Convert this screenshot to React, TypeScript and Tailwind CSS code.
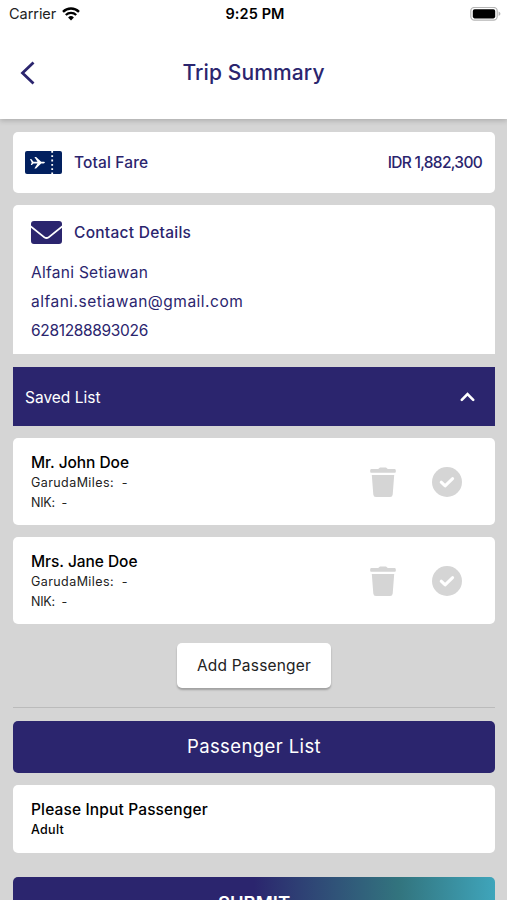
const passengers = [
  { name: "Mr. John Doe", miles: "-", nik: "-" },
  { name: "Mrs. Jane Doe", miles: "-", nik: "-" },
];

function StatusBar() {
  return (
    <div className="grid h-7 grid-cols-3 items-center pr-1.5 pl-[9px] text-[14.5px] text-[#222]">
      <div className="flex items-center gap-1.5">
        <span className="tracking-[-0.05px]">Carrier</span>
        <svg className="h-[14px] w-[18px]" viewBox="0 0 18 14" fill="none" stroke="#000">
          <path d="M1 4.8a11.4 11.4 0 0 1 16 0" strokeWidth="2.4" />
          <path d="M3.8 8a7.5 7.5 0 0 1 10.4 0" strokeWidth="2.3" />
          <path d="M9 13.4 6.1 10.5a4.1 4.1 0 0 1 5.8 0Z" fill="#000" stroke="none" />
        </svg>
      </div>
      <span className="text-center font-semibold tracking-[0.1px] text-black">9:25 PM</span>
      <svg className="h-[14px] w-[31px] justify-self-end" viewBox="0 0 31 14">
        <rect x="0.8" y="0.4" width="26.4" height="12.8" rx="3.6" fill="#fff" stroke="#b5b5b5" strokeWidth="1.2" />
        <rect x="2.8" y="2.2" width="22.4" height="9.2" rx="1.8" fill="#000" />
        <path d="M28.6 4.6v4.4c1.2-.5 1.8-1.3 1.8-2.2s-.6-1.7-1.8-2.2Z" fill="#b5b5b5" />
      </svg>
    </div>
  );
}

function TicketIcon() {
  return (
    <svg className="h-[23px] w-[37px] shrink-0" viewBox="0 0 37 23">
      <rect width="37" height="23" rx="2" fill="#02205f" />
      <path d="M27.2 0v23" stroke="#fff" strokeWidth="1.8" strokeDasharray="1.8 2.5" />
      <path
        d="M5 8h1.2l2.3 2.8h4L9.4 6h1.7l5.1 4.8h2.3c.9 0 1.4.3 1.4.8s-.5.8-1.4.8h-2.3l-5.1 5H9.4l3.1-5h-4L6.9 14H5.8l.9-2.4Z"
        fill="#fff"
      />
    </svg>
  );
}

function EnvelopeIcon() {
  return (
    <svg className="h-[23px] w-[31px] shrink-0" viewBox="0 0 31 23" fill="currentColor">
      <path d="M3 0h25a3 3 0 0 1 3 3v1.6L17.3 15.4a3 3 0 0 1-3.6 0L0 4.6V3a3 3 0 0 1 3-3Z" />
      <path d="M0 6.8 12.8 17a4.4 4.4 0 0 0 5.4 0L31 6.8V20a3 3 0 0 1-3 3H3a3 3 0 0 1-3-3Z" />
    </svg>
  );
}

function TrashIcon() {
  return (
    <svg className="ml-auto h-[30px] w-[26px] shrink-0" viewBox="0 0 26 30" fill="#d5d5d5">
      <path d="M8.2 2 10 .5h6L17.8 2h6.7c.8 0 1.3.6 1.3 1.3v1.4c0 .7-.5 1.1-1.3 1.1h-23C.7 5.800.2 5.400.2 4.700V3.300C.2 2.600.7 2 1.500 2Z" />
      <path d="M1.800 8h22.400l-1.500 19.400a2.700 2.700 0 0 1-2.700 2.500H6a2.700 2.700 0 0 1-2.700-2.500Z" />
    </svg>
  );
}

function CheckIcon() {
  return (
    <svg className="ml-9 size-[30px] shrink-0" viewBox="0 0 30 30" fill="none">
      <circle cx="15" cy="15" r="15" fill="#d5d5d5" />
      <path d="m9.200 15.200 3.900 3.700 7.500-7.300" stroke="#fff" strokeWidth="3" strokeLinecap="round" strokeLinejoin="round" />
    </svg>
  );
}

export default function App() {
  return (
    <div className="flex h-[900px] w-full flex-col overflow-hidden bg-[#d5d5d5] font-['Inter',sans-serif] text-[#2b256e]">
      <header className="h-[119px] shrink-0 bg-white shadow-[0_2px_5px_rgba(0,0,0,0.18)]">
        <StatusBar />
        <div className="grid h-[89px] grid-cols-[1fr_auto_1fr] items-center px-5">
          <svg className="h-6 w-4" viewBox="0 0 16 24" fill="none" stroke="#2b256e" strokeWidth="2.8">
            <path d="M13.500 1.500 2.500 12l11 10.500" />
          </svg>
          <h1 className="text-[21px] font-medium tracking-[0.12px]">Trip Summary</h1>
        </div>
      </header>

      <main className="flex flex-col pt-[13px] pr-3 pl-[13px]">
        <section className="flex h-[61px] shrink-0 items-center rounded-[5px] bg-white pr-[13px] pl-3">
          <TicketIcon />
          <span className="ml-3 pt-px text-[15.5px] font-medium tracking-[0.15px]">Total Fare</span>
          <span className="ml-auto pt-px text-[15.5px] font-medium tracking-[-0.7px]">IDR 1,882,300</span>
        </section>

        <section className="mt-3 h-[149px] shrink-0 rounded-t-[5px] bg-white px-[18px] pt-3">
          <div className="flex h-[31px] items-center">
            <EnvelopeIcon />
            <h2 className="ml-3 pt-px text-[15.5px] font-medium tracking-[0.27px]">Contact Details</h2>
          </div>
          <div className="mt-[10px] flex flex-col text-[15.5px] leading-[29px]">
            <span className="tracking-[0.28px]">Alfani Setiawan</span>
            <span className="tracking-[0.5px]">alfani.setiawan@gmail.com</span>
            <span className="tracking-[-0.33px]">6281288893026</span>
          </div>
        </section>

        <button className="mt-[13px] flex h-[59px] shrink-0 items-center justify-between bg-[#2b256e] pr-5 pl-3 text-[15.5px] text-white">
          <span className="pt-0.5">Saved List</span>
          <svg className="h-[10px] w-[15px]" viewBox="0 0 15 10" fill="none" stroke="currentColor" strokeWidth="2.6" strokeLinecap="round">
            <path d="M1.800 7.800 7.500 2l5.700 5.800" />
          </svg>
        </button>

        {passengers.map((p) => (
          <section key={p.name} className="mt-3 flex h-[87px] shrink-0 items-center rounded-[5px] bg-white pr-[33px] pl-[18px]">
            <div className="flex flex-col pt-0.5 text-[12.5px] leading-5 text-[#222]">
              <h3 className="text-[15.5px] font-medium tracking-[-0.05px] text-black">{p.name}</h3>
              <span className="tracking-[0.42px]">GarudaMiles:&nbsp; {p.miles}</span>
              <span className="tracking-[-0.2px]">NIK:&nbsp; {p.nik}</span>
            </div>
            <TrashIcon />
            <CheckIcon />
          </section>
        ))}

        <button className="mt-[19px] h-[45px] w-[154px] shrink-0 self-center rounded-[5px] bg-white pt-px text-[15.5px] tracking-[0.2px] text-[#222] shadow-[0_2px_2px_rgba(0,0,0,0.25)]">
          Add Passenger
        </button>

        <hr className="mt-[19px] border-t border-[#bbb]" />

        <h2 className="mt-[13px] flex h-[52px] shrink-0 items-center justify-center rounded-[5px] bg-[#2b256e] text-[18.5px] tracking-[0.4px] text-white">
          Passenger List
        </h2>

        <section className="mt-3 flex h-[68px] shrink-0 flex-col justify-center rounded-[5px] bg-white pl-[18px] text-black">
          <h3 className="text-[15.5px] leading-[21px] font-medium tracking-[0.14px]">Please Input Passenger</h3>
          <span className="text-[12.5px] leading-[19px] font-medium tracking-[0.3px]">Adult</span>
        </section>

        <button className="mt-6 h-[53px] shrink-0 rounded-[5px] bg-linear-to-r from-[#2b256e] from-50% via-[#32747e] via-80% to-[#3fa5bb] text-[18.5px] font-semibold text-white">
          SUBMIT
        </button>
      </main>
    </div>
  );
}
